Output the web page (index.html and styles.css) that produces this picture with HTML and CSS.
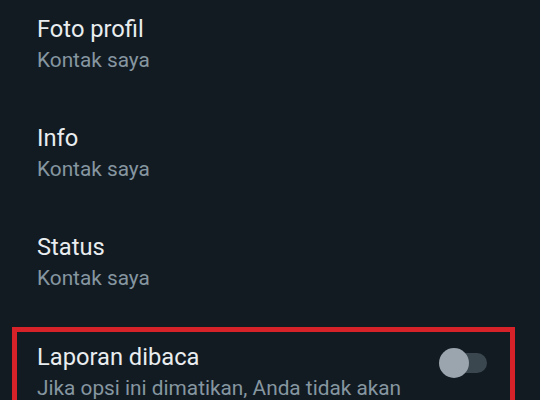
FILE: index.html
```html
<!DOCTYPE html>
<html lang="id">
<head>
<meta charset="utf-8">
<link rel="stylesheet" href="styles.css">
</head>
<body>
<div class="list">
  <div class="row">
    <div class="text">
      <div class="title">Foto profil</div>
      <div class="sub">Kontak saya</div>
    </div>
  </div>
  <div class="row">
    <div class="text">
      <div class="title">Info</div>
      <div class="sub">Kontak saya</div>
    </div>
  </div>
  <div class="row">
    <div class="text">
      <div class="title">Status</div>
      <div class="sub">Kontak saya</div>
    </div>
  </div>
  <div class="row highlight">
    <div class="text">
      <div class="title">Laporan dibaca</div>
      <div class="sub">Jika opsi ini dimatikan, Anda tidak akan</div>
    </div>
    <div class="switch"></div>
    <div class="thumb"></div>
  </div>
</div>
</body>
</html>
```
FILE: styles.css
```css
html, body {
  margin: 0;
  padding: 0;
  background: #121b22;
  width: 540px;
  height: 400px;
  overflow: hidden;
}
body {
  font-family: Roboto, "Noto Sans", sans-serif;
}
.list {
  display: flex;
  flex-direction: column;
  padding-top: 15px;
}
.row {
  display: flex;
  align-items: flex-start;
  height: 109px;
  padding-left: 37px;
  box-sizing: border-box;
  flex-shrink: 0;
}
.text {
  display: flex;
  flex-direction: column;
}
.title {
  color: #e9edef;
  font-size: 23.7px;
  line-height: 28px;
  white-space: nowrap;
}
.sub {
  color: #8696a0;
  font-size: 20.8px;
  line-height: 28px;
  margin-top: 3px;
  white-space: nowrap;
}
.highlight {
  margin-left: 12px;
  margin-top: -15px;
  width: 503px;
  height: 100px;
  border: 5px solid #d8222a;
  border-bottom: none;
  padding-left: 20px;
  padding-top: 11px;
  position: relative;
}
.switch {
  position: absolute;
  left: 428px;
  top: 21px;
  width: 42px;
  height: 20px;
  border-radius: 10px;
  background: #3b474f;
}
.thumb {
  position: absolute;
  left: 422px;
  top: 16px;
  width: 30px;
  height: 30px;
  border-radius: 50%;
  background: #9aa5ad;
}
```
